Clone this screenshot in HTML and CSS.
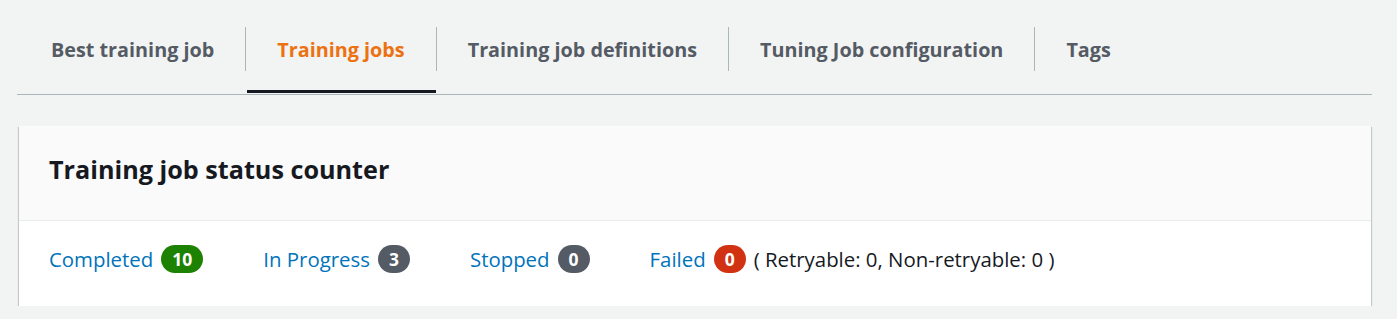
FILE: index.html
```html
<!DOCTYPE html>
<html lang="en">
<head>
<meta charset="utf-8">
<title>Training jobs</title>
<link rel="stylesheet" href="styles.css">
</head>
<body>
<div class="page">
  <div class="tabs">
    <div class="tab first"><div class="tab-label">Best training job</div></div>
    <div class="tab active"><div class="tab-label">Training jobs</div></div>
    <div class="tab"><div class="tab-label">Training job definitions</div></div>
    <div class="tab"><div class="tab-label">Tuning Job configuration</div></div>
    <div class="tab last"><div class="tab-label">Tags</div></div>
  </div>
  <div class="card">
    <div class="card-header"><h2 class="card-title">Training job status counter</h2></div>
    <div class="card-body">
      <div class="status"><a class="status-link" href="#">Completed</a><span class="badge green">10</span></div>
      <div class="status"><a class="status-link" href="#">In Progress</a><span class="badge grey">3</span></div>
      <div class="status"><a class="status-link" href="#">Stopped</a><span class="badge grey">0</span></div>
      <div class="status"><a class="status-link" href="#">Failed</a><span class="badge red">0</span><span class="note">( Retryable: 0, Non-retryable: 0 )</span></div>
    </div>
  </div>
</div>
</body>
</html>
```

FILE: styles.css
```css
html, body {
  margin: 0;
  padding: 0;
  background: #f2f3f3;
}
body {
  font-family: "Open Sans", "Noto Sans", sans-serif;
  color: #16191f;
}
.page {
  padding: 0 25px 0 17px;
}
.tabs {
  display: flex;
  border-bottom: 1px solid #aab7b8;
  height: 94px;
  box-sizing: content-box;
}
.tab {
  position: relative;
  padding-top: 27px;
  box-sizing: border-box;
  height: 94px;
}
.tab-label {
  height: 44px;
  display: flex;
  align-items: center;
  padding: 0 31px;
  border-right: 1px solid #aab7b8;
  font-size: 19.8px;
  font-weight: 700;
  color: #545b64;
  white-space: nowrap;
}
.tab.first .tab-label {
  padding-left: 34px;
}
.tab.last .tab-label {
  border-right: none;
}
.tab.active .tab-label {
  color: #ec7211;
}
.tab.active::after {
  content: "";
  position: absolute;
  left: 1px;
  right: 1px;
  bottom: 1px;
  height: 3px;
  background: #16191f;
}
.card {
  margin: 31px 1px 0 2px;
  background: #fff;
  box-shadow: 0 1px 1px 0 rgba(0, 28, 36, 0.3), 1px 1px 1px 0 rgba(0, 28, 36, 0.15), -1px 1px 1px 0 rgba(0, 28, 36, 0.15);
}
.card-header {
  background: #fafafa;
  border-bottom: 1px solid #eaeded;
  height: 95px;
  box-sizing: border-box;
  display: flex;
  align-items: center;
  padding: 0 30px 9px;
}
.card-title {
  margin: 0;
  font-size: 25.2px;
  font-weight: 700;
  color: #16191f;
}
.card-body {
  height: 85px;
  box-sizing: border-box;
  display: flex;
  align-items: center;
  gap: 60px;
  padding: 0 30px 9px;
  font-size: 20.4px;
}
.status {
  display: flex;
  align-items: center;
  gap: 8px;
}
.status-link {
  color: #0073bb;
  text-decoration: none;
}
.badge {
  display: inline-flex;
  align-items: center;
  justify-content: center;
  height: 28px;
  padding: 0 11px;
  border-radius: 14px;
  color: #fff;
  font-weight: 700;
  font-size: 17.5px;
}
.badge.green { background: #1d8102; }
.badge.grey { background: #545b64; }
.badge.red { background: #d13212; }
.note {
  color: #16191f;
}
```
